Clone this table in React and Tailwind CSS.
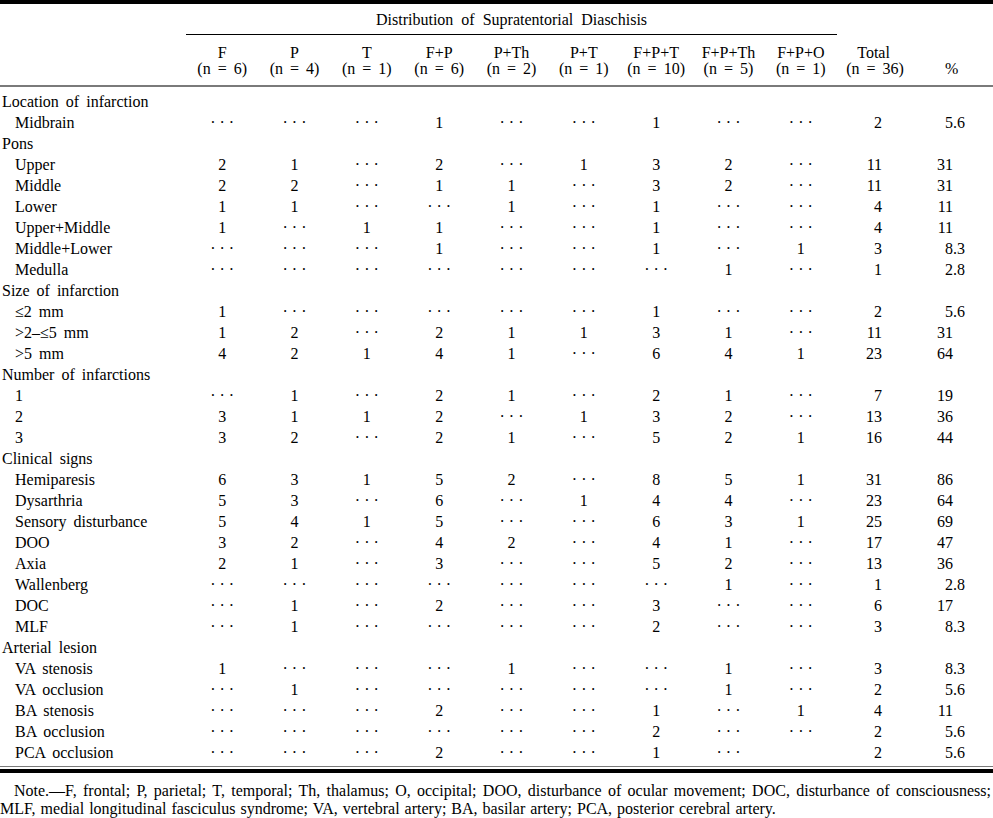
import React from 'react';

const DOTS = '· · ·';

// '-' = dots, '_' = empty cell
const sections = [
  {
    title: 'Location of infarction',
    rows: [['Midbrain', '- - - 1 - - 1 - - 2 5.6']],
  },
  {
    title: 'Pons',
    rows: [
      ['Upper', '2 1 - 2 - 1 3 2 - 11 31'],
      ['Middle', '2 2 - 1 1 - 3 2 - 11 31'],
      ['Lower', '1 1 - - 1 - 1 - - 4 11'],
      ['Upper+Middle', '1 - 1 1 - - 1 - - 4 11'],
      ['Middle+Lower', '- - - 1 - - 1 - 1 3 8.3'],
      ['Medulla', '- - - - - - - 1 - 1 2.8'],
    ],
  },
  {
    title: 'Size of infarction',
    rows: [
      ['≤2 mm', '1 - - - - - 1 - - 2 5.6'],
      ['>2–≤5 mm', '1 2 - 2 1 1 3 1 - 11 31'],
      ['>5 mm', '4 2 1 4 1 - 6 4 1 23 64'],
    ],
  },
  {
    title: 'Number of infarctions',
    rows: [
      ['1', '- 1 - 2 1 - 2 1 - 7 19'],
      ['2', '3 1 1 2 - 1 3 2 - 13 36'],
      ['3', '3 2 - 2 1 - 5 2 1 16 44'],
    ],
  },
  {
    title: 'Clinical signs',
    rows: [
      ['Hemiparesis', '6 3 1 5 2 - 8 5 1 31 86'],
      ['Dysarthria', '5 3 - 6 - 1 4 4 - 23 64'],
      ['Sensory disturbance', '5 4 1 5 - - 6 3 1 25 69'],
      ['DOO', '3 2 - 4 2 - 4 1 - 17 47'],
      ['Axia', '2 1 - 3 - - 5 2 - 13 36'],
      ['Wallenberg', '- - - - - - - 1 - 1 2.8'],
      ['DOC', '- 1 - 2 - - 3 - - 6 17'],
      ['MLF', '- 1 - - - - 2 - - 3 8.3'],
    ],
  },
  {
    title: 'Arterial lesion',
    rows: [
      ['VA stenosis', '1 - - - 1 - - 1 - 3 8.3'],
      ['VA occlusion', '- 1 - - - - - 1 - 2 5.6'],
      ['BA stenosis', '- - - 2 - - 1 - 1 4 11'],
      ['BA occlusion', '- - - - - - 2 - - 2 5.6'],
      ['PCA occlusion', '- - - 2 - - 1 - _ 2 5.6'],
    ],
  },
];

const groups = [
  ['F', '6'],
  ['P', '4'],
  ['T', '1'],
  ['F+P', '6'],
  ['P+Th', '2'],
  ['P+T', '1'],
  ['F+P+T', '10'],
  ['F+P+Th', '5'],
  ['F+P+O', '1'],
];

const cellText = (v) => (v === '-' ? DOTS : v === '_' ? '' : v);

function Percent({ value }) {
  const [whole, frac] = value.split('.');
  return (
    <div className="flex">
      <span className="w-[40px] text-right">{whole}</span>
      {frac && <span>.{frac}</span>}
    </div>
  );
}

function DataRow({ label, values }) {
  const v = values.split(' ');
  return (
    <tr className="h-[21px]">
      <td className="pl-[15px] whitespace-nowrap [word-spacing:3px]">{label}</td>
      {v.slice(0, 9).map((x, i) => (
        <td key={i} className="text-center whitespace-nowrap">
          {cellText(x)}
        </td>
      ))}
      <td className="text-right pr-[31px]">{v[9]}</td>
      <td>
        <Percent value={v[10]} />
      </td>
    </tr>
  );
}

export default function App() {
  return (
    <div className="w-[993px] bg-white text-black font-['Liberation_Serif',serif] text-[16px]">
      <div className="h-[4px] bg-black" />

      <table className="w-full table-fixed border-collapse">
        <colgroup>
          <col className="w-[186px]" />
          {groups.map((g) => (
            <col key={g[0]} className="w-[72.33px]" />
          ))}
          <col className="w-[76px]" />
          <col className="w-[80px]" />
        </colgroup>
        <thead>
          <tr className="h-[30px]">
            <th />
            <th colSpan={9} className="font-normal text-center border-b border-black leading-[20px] pt-[2px] [word-spacing:4px]">
              Distribution of Supratentorial Diaschisis
            </th>
            <th />
            <th />
          </tr>
          <tr className="h-[26px]">
            <th />
            {groups.map((g) => (
              <th key={g[0]} className="font-normal text-center align-bottom leading-[14px]">
                {g[0]}
              </th>
            ))}
            <th className="font-normal text-center align-bottom leading-[14px] pr-[3px]">Total</th>
            <th />
          </tr>
          <tr className="h-[26px] border-b-2 border-[#7a7a7a]">
            <th />
            {groups.map((g) => (
              <th key={g[0]} className="font-normal text-center align-top leading-[18px] whitespace-nowrap [word-spacing:3px]">
                (n = {g[1]})
              </th>
            ))}
            <th className="font-normal text-center align-top leading-[18px] whitespace-nowrap [word-spacing:3px]">
              (n = 36)
            </th>
            <th className="font-normal text-center align-top leading-[18px] pr-[3px]">%</th>
          </tr>
        </thead>
        <tbody className="leading-[21px]">
          <tr className="h-[5px]">
            <td colSpan={12} />
          </tr>
          {sections.map((s) => (
            <React.Fragment key={s.title}>
              <tr className="h-[21px]">
                <td colSpan={12} className="pl-[2px] [word-spacing:3px]">
                  {s.title}
                </td>
              </tr>
              {s.rows.map((r) => (
                <DataRow key={s.title + r[0]} label={r[0]} values={r[1]} />
              ))}
            </React.Fragment>
          ))}
          <tr className="h-[3px]">
            <td colSpan={12} />
          </tr>
        </tbody>
      </table>

      <div className="h-px bg-[#7a7a7a]" />
      <div className="mt-[2px] h-[4px] bg-black" />

      <div className="mt-[9px] leading-[18px] pr-[2px]">
        <p className="indent-[14px] text-justify [text-align-last:justify]">
          Note.—F, frontal; P, parietal; T, temporal; Th, thalamus; O, occipital; DOO, disturbance of ocular movement; DOC, disturbance of consciousness;
        </p>
        <p className="[word-spacing:1px]">MLF, medial longitudinal fasciculus syndrome; VA, vertebral artery; BA, basilar artery; PCA, posterior cerebral artery.</p>
      </div>
    </div>
  );
}
